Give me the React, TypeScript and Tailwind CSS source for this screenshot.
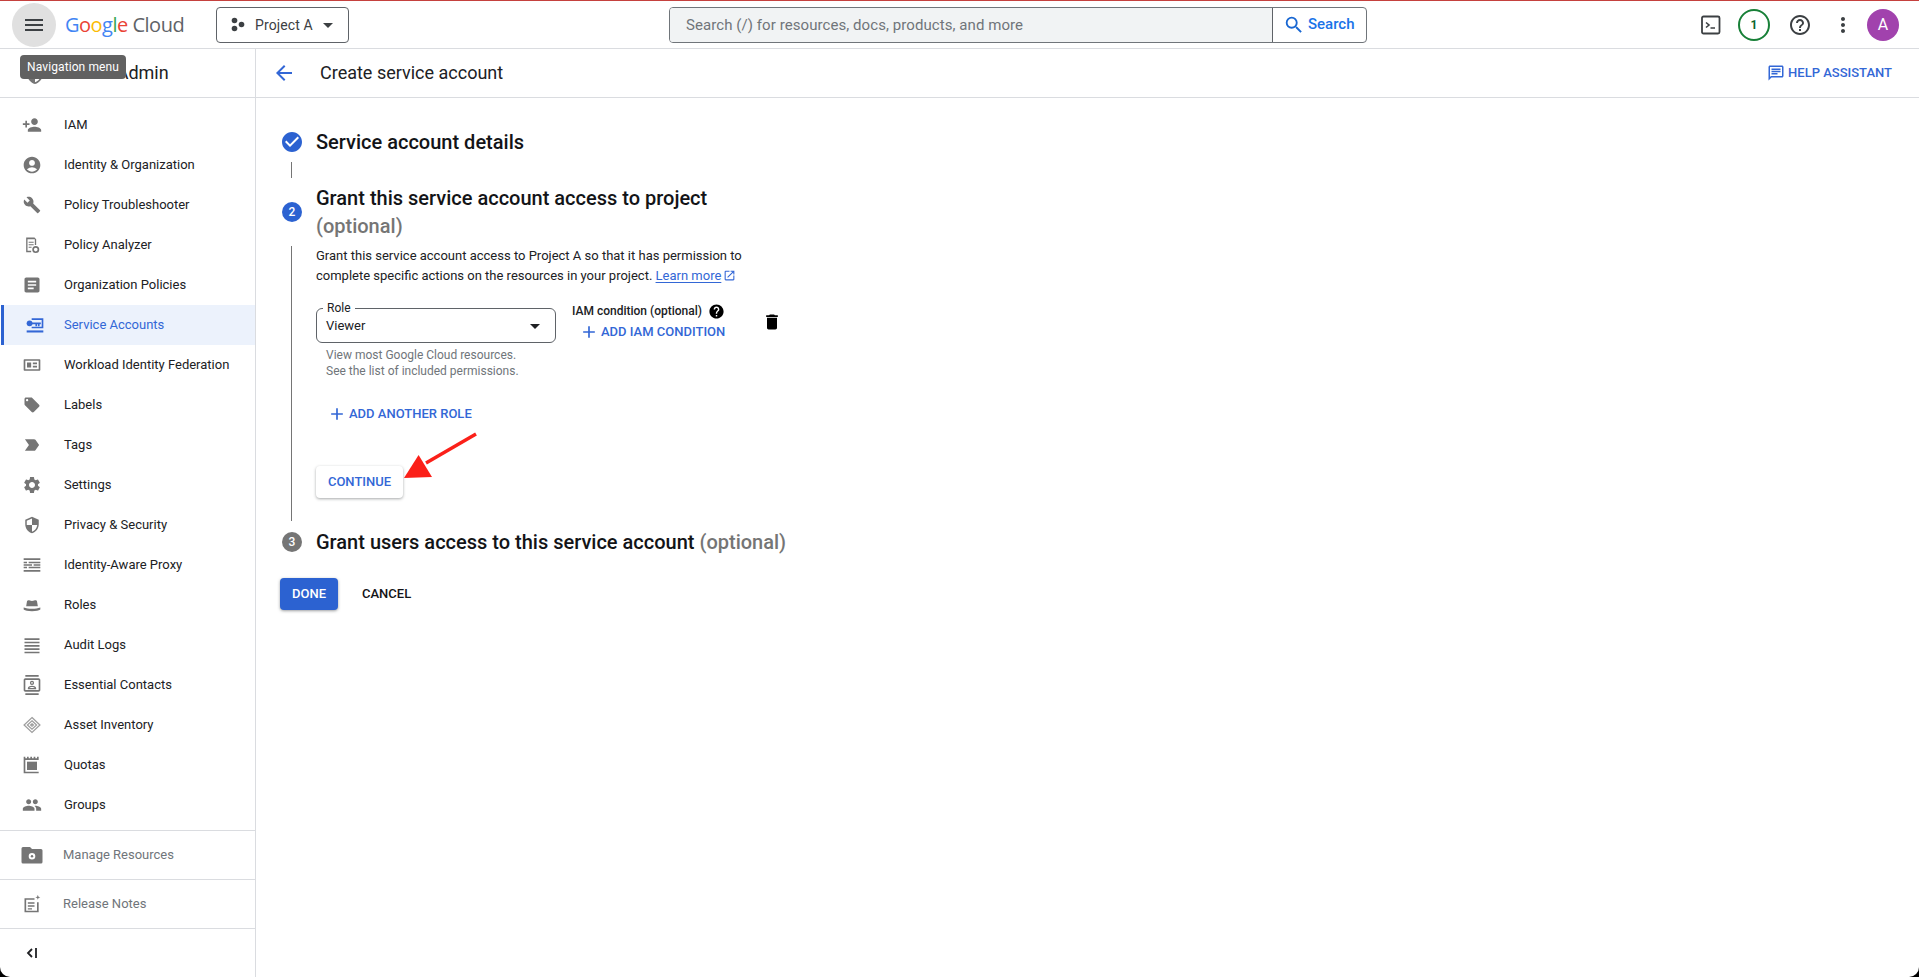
import { ReactNode } from "react";
import {
  MdAccountCircle, MdAdd, MdArrowBack, MdArrowDropDown, MdArticle, MdBuild, MdCheckCircle, MdDelete,
  MdHelp, MdHelpOutline, MdLabelImportant, MdLocalOffer, MdMenu, MdMoreVert, MdOpenInNew, MdOutlineChat,
  MdOutlineContacts, MdPeople, MdPersonAdd, MdSearch, MdSecurity, MdSettings,
} from "react-icons/md";

const G = "#757575";

function Svg({ children }: { children: ReactNode }) {
  return <svg width="20" height="20" viewBox="0 0 24 24" fill={G}>{children}</svg>;
}

const AnalyzerIcon = () => (
  <Svg>
    <path d="M5 3h10l2 2v7h-1.600V5H6.600v14H11v1.600H5z" />
    <path d="M8 8h6v1.300H8zM8 11h6v1.300H8zM8 14h3.500v1.300H8z" />
    <circle cx="16.500" cy="17.500" r="3.200" fill="none" stroke={G} strokeWidth="2" />
  </Svg>
);
const ServiceAccountIcon = () => (
  <svg width="20" height="20" viewBox="0 0 24 24" fill="#3367d6">
    <path d="M2 18.500h20V21H2z" />
    <path d="M8 4v2h12v8H8v2h14V4z" />
    <circle cx="5.500" cy="10" r="3.500" />
    <path d="M8 9h11v2.200h-1.500v2.300h-2v-2.300h-1v2.300h-2v-2.300H8z" />
  </svg>
);
const WorkloadIcon = () => (
  <Svg>
    <path fillRule="evenodd" d="M3 5h18a1 1 0 0 1 1 1v12a1 1 0 0 1-1 1H3a1 1 0 0 1-1-1V6a1 1 0 0 1 1-1zm1 2v10h16V7z" />
    <path d="M6 9h5v6H6zM13 9h5v2h-5zM13 13h5v2h-5z" />
  </Svg>
);
const ProxyIcon = () => (
  <Svg>
    <path d="M2 4h20v2H2zM2 18h20v2H2zM2 8h4v2H2zM8 8h14v2H8zM2 14h4v2H2zM8 14h14v2H8zM2 11h10v2H2zM14 11h8v2h-8z" />
  </Svg>
);
const RolesIcon = () => (
  <Svg>
    <path d="M6 7.500C6.500 6 8 6 9.500 6.700c1.500.6 3.500.6 5 0C16 6 17.500 6 18 7.500l1 6H5z" />
    <path d="M2 15c3 1 6 1.500 10 1.500S19 16 22 15v2.500c-2 1.500-5 2-10 2s-8-.5-10-2z" />
  </Svg>
);
const AuditIcon = () => (
  <Svg>
    <path d="M3 4h18v2H3zM3 8h18v2H3zM3 12h18v2H3zM3 16h18v2H3zM3 20h18v2H3z" />
  </Svg>
);
const AssetIcon = () => (
  <Svg>
    <g fill="none" stroke="#9e9e9e" strokeWidth="1.500">
      <path d="M12 3l9.500 9-9.500 9-9.500-9z" />
      <path d="M12 7l5.500 5-5.500 5-5.500-5z" />
      <path d="M12 10.500l1.700 1.500-1.700 1.500-1.700-1.500z" />
    </g>
  </Svg>
);
const QuotasIcon = () => (
  <Svg>
    <path fillRule="evenodd" d="M2 2h2v2h2V2h2v2h2V2h2v2h2V2h2v2h2V2h2v20H2zm2 4v14h16V6z" />
    <path d="M6 8h12v10H6z" />
  </Svg>
);
const FolderGearIcon = () => (
  <svg width="24" height="24" viewBox="0 0 24 24" fill={G}>
    <path fillRule="evenodd" d="M3 4h7l2 2h9a1.500 1.500 0 0 1 1.500 1.500V19a1.500 1.500 0 0 1-1.500 1.500H3A1.500 1.500 0 0 1 1.500 19V5.500A1.500 1.500 0 0 1 3 4zm9 6a3.300 3.300 0 1 0 0 6.600 3.300 3.300 0 0 0 0-6.600z" />
    <circle cx="12" cy="13.300" r="1.200" />
  </svg>
);
const NotesIcon = () => (
  <Svg>
    <path d="M3 5h12v2H5v13h13V10h2v12H3z" />
    <path d="M7 10h8v1.700H7zM7 13.500h8v1.700H7zM7 17h5v1.700H7z" />
    <path d="M19 1l.8 2.200L22 4l-2.200.8L19 7l-.8-2.200L16 4l2.200-.8z" />
  </Svg>
);

const items: { label: string; icon: ReactNode; active?: boolean }[] = [
  { label: "IAM", icon: <MdPersonAdd size={20} color={G} /> },
  { label: "Identity & Organization", icon: <MdAccountCircle size={20} color={G} /> },
  { label: "Policy Troubleshooter", icon: <MdBuild size={18} color={G} /> },
  { label: "Policy Analyzer", icon: <AnalyzerIcon /> },
  { label: "Organization Policies", icon: <MdArticle size={20} color={G} /> },
  { label: "Service Accounts", icon: <ServiceAccountIcon />, active: true },
  { label: "Workload Identity Federation", icon: <WorkloadIcon /> },
  { label: "Labels", icon: <MdLocalOffer size={18} color={G} /> },
  { label: "Tags", icon: <MdLabelImportant size={20} color={G} /> },
  { label: "Settings", icon: <MdSettings size={20} color={G} /> },
  { label: "Privacy & Security", icon: <MdSecurity size={18} color={G} /> },
  { label: "Identity-Aware Proxy", icon: <ProxyIcon /> },
  { label: "Roles", icon: <RolesIcon /> },
  { label: "Audit Logs", icon: <AuditIcon /> },
  { label: "Essential Contacts", icon: <MdOutlineContacts size={20} color={G} /> },
  { label: "Asset Inventory", icon: <AssetIcon /> },
  { label: "Quotas", icon: <QuotasIcon /> },
  { label: "Groups", icon: <MdPeople size={20} color={G} /> },
];

function TopBar() {
  return (
    <header className="relative h-[49px] shrink-0 flex items-center border-t border-t-[#c5413e] border-b border-b-[#dadce0] bg-white">
      <div className="ml-3 w-11 h-11 rounded-full bg-[#e0e0e0] flex items-center justify-center">
        <MdMenu size={24} color="#3c4043" />
      </div>
      <div className="ml-[9px] w-[151px] text-[20px] tracking-[-0.5px] leading-none font-['Open_Sans',sans-serif]">
        <span className="text-[#4285f4]">G</span>
        <span className="text-[#ea4335]">o</span>
        <span className="text-[#fbbc04]">o</span>
        <span className="text-[#4285f4]">g</span>
        <span className="text-[#34a853]">l</span>
        <span className="text-[#ea4335]">e</span>
        <span className="text-[#5f6368]"> Cloud</span>
      </div>
      <div className="w-[133px] h-9 border border-[#5f6368] rounded flex items-center pl-[13px] text-sm text-[#3c4043]">
        <svg width="16" height="16" viewBox="0 0 16 16" fill="#3c4043">
          <circle cx="4.500" cy="3.500" r="2.800" />
          <circle cx="11.500" cy="7.500" r="2.800" />
          <circle cx="4.500" cy="11.500" r="2.800" />
        </svg>
        <span className="ml-[9px] tracking-[0.1px]">Project A</span>
        <MdArrowDropDown size={24} className="ml-[3px]" color="#3c4043" />
      </div>
      <div className="ml-[320px] w-[698px] h-9 border border-[#70757a] rounded flex overflow-hidden">
        <div className="flex-1 bg-[#f1f3f4] border-r border-[#5f6368] flex items-center pl-4 pt-px text-[15px] tracking-[0.07px] text-[#70757a]">
          Search (/) for resources, docs, products, and more
        </div>
        <div className="w-[93px] flex items-center pl-[10px] text-[15px] font-medium text-[#1a73e8]">
          <MdSearch size={22} color="#1967d2" />
          <span className="ml-[3px]">Search</span>
        </div>
      </div>
      <div className="ml-auto flex items-center">
        <svg width="20" height="20" viewBox="0 0 20 20" className="mr-[17px]">
          <rect x="1" y="1.500" width="17.500" height="17" rx="1.500" fill="none" stroke="#3c4043" strokeWidth="1.800" />
          <path d="M5 7.500l3 2.500-3 2.500M9.500 13h4.500" fill="none" stroke="#3c4043" strokeWidth="1.600" />
        </svg>
        <div className="w-8 h-8 rounded-full border-2 border-[#188038] flex items-center justify-center text-xs font-bold text-[#0d652d]">1</div>
        <MdHelpOutline size={24} color="#3c4043" className="ml-[18px]" />
        <MdMoreVert size={24} color="#3c4043" className="ml-[19px]" />
        <div className="ml-3 mr-5 w-8 h-8 rounded-full bg-[#a142ad] flex items-center justify-center text-white text-base">A</div>
      </div>
    </header>
  );
}

function Sidebar() {
  return (
    <aside className="relative w-[256px] shrink-0 border-r border-[#dadce0] flex flex-col">
      <div className="h-[49px] shrink-0 border-b border-[#dadce0] flex items-center pl-[64px] text-lg text-[#202124]">IAM &amp; Admin</div>
      <div className="absolute left-[24px] top-[14px]">
        <MdSecurity size={22} color={G} />
      </div>
      <nav className="pt-[7px]">
        {items.map((it) => (
          <div
            key={it.label}
            className={
              it.active
                ? "h-10 flex items-center bg-[#ecf2fc] border-l-[3px] border-[#2c62d1] ml-px text-[#3367d6]"
                : "h-10 flex items-center text-[#202124]"
            }
          >
            <span className={it.active ? "w-[20px] ml-[21px] flex justify-center" : "w-[20px] ml-[22px] flex justify-center"}>{it.icon}</span>
            <span className={it.active ? "ml-[19px] text-[13px]" : "ml-[22px] text-[13px]"}>{it.label}</span>
          </div>
        ))}
      </nav>
      <div className="mt-[5px] h-[49px] border-t border-[#dadce0] flex items-center text-[13px] text-[#70757a]">
        <span className="w-6 ml-5 flex justify-center"><FolderGearIcon /></span>
        <span className="ml-[19px]">Manage Resources</span>
      </div>
      <div className="h-[49px] border-t border-[#dadce0] flex items-center text-[13px] text-[#70757a]">
        <span className="w-6 ml-5 flex justify-center"><NotesIcon /></span>
        <span className="ml-[19px]">Release Notes</span>
      </div>
      <div className="h-[49px] border-t border-[#dadce0] flex items-center pl-[26px]">
        <svg width="12" height="12" viewBox="0 0 12 12" fill="none" stroke="#202124" strokeWidth="1.800">
          <path d="M6 2L2 6l4 4" />
          <path d="M10 1v10" />
        </svg>
      </div>
    </aside>
  );
}

function StepCircle({ n, gray }: { n: number; gray?: boolean }) {
  return (
    <div className={gray ? "w-5 h-5 rounded-full bg-[#757575] text-white text-xs font-medium flex items-center justify-center" : "w-5 h-5 rounded-full bg-[#2c62d1] text-white text-xs font-medium flex items-center justify-center"}>
      {n}
    </div>
  );
}

function Main() {
  return (
    <main className="flex-1 flex flex-col">
      <div className="h-[49px] shrink-0 border-b border-[#dadce0] flex items-center pl-4 pr-[27px]">
        <MdArrowBack size={24} color="#3367d6" className="mr-[24px] ml-0" />
        <span className="ml-0 text-lg text-[#202124]">Create service account</span>
        <div className="ml-auto flex items-center text-[13px] font-medium text-[#3367d6]">
          <MdOutlineChat size={18} color="#3367d6" />
          <span className="ml-[3px]">HELP ASSISTANT</span>
        </div>
      </div>

      <div className="pl-6 pt-[33px] relative flex-1">
        {/* step 1 */}
        <div className="flex items-center h-[22px]">
          <MdCheckCircle size={24} color="#2c62d1" className="mr-3" />
          <h2 className="text-xl font-medium text-[#131417]">Service account details</h2>
        </div>
        <div className="ml-[11px] mt-[9px] h-4 w-px bg-[#757575]" />

        {/* step 2 */}
        <div className="flex items-center mt-[6px]">
          <div className="ml-0.5 mr-[14px]"><StepCircle n={2} /></div>
          <h2 className="w-[420px] text-xl leading-7 font-medium text-[#131417]">
            Grant this service account access to project <span className="text-[#757575]">(optional)</span>
          </h2>
        </div>
        <div className="ml-[11px] mt-[6px] pl-[24px] border-l border-[#757575] h-[275px]">
          <p className="w-[440px] text-[13px] leading-5 text-[#202124]">
            Grant this service account access to Project A so that it has permission to complete specific actions on the resources in your project.{" "}
            <span className="text-[#3367d6] underline underline-offset-2">Learn more</span>
            <MdOpenInNew size={13} color="#3367d6" className="inline ml-0.5 -mt-0.5" />
          </p>
          <div className="flex mt-[22px]">
            <div className="w-[240px]">
              <div className="relative h-[35px] border border-[#5f6368] rounded-md flex items-center pl-[9px] text-[13px] text-[#202124]">
                <span className="absolute -top-[8px] left-[6px] bg-white px-[4px] text-xs leading-[14px]">Role</span>
                <span>Viewer</span>
                <MdArrowDropDown size={24} color="#202124" className="ml-auto mr-2" />
              </div>
              <p className="pl-[10px] mt-[4px] text-xs leading-4 text-[#70757a]">View most Google Cloud resources.</p>
              <p className="pl-[10px] text-xs leading-4 text-[#70757a]">See the list of included permissions.</p>
            </div>
            <div className="ml-4 -mt-[5px]">
              <div className="flex items-center text-xs font-medium text-[#202124] h-[16px]">
                IAM condition (optional)
                <MdHelp size={17} color="#000" className="ml-1.5" />
              </div>
              <div className="flex items-center ml-[7px] mt-[3px] text-[13px] font-medium text-[#3367d6] h-[20px]">
                <MdAdd size={20} color="#3367d6" />
                <span className="ml-[2px]">ADD IAM CONDITION</span>
              </div>
            </div>
            <MdDelete size={20} color="#000" className="ml-[37px] mt-1" />
          </div>
          <div className="flex items-center mt-[25px] ml-[11px] text-[13px] font-medium text-[#3367d6] h-5">
            <MdAdd size={20} color="#3367d6" />
            <span className="ml-[2px]">ADD ANOTHER ROLE</span>
          </div>
          <div className="mt-[42px] w-[87px] h-8 rounded bg-white shadow-[0_1px_3px_rgba(60,64,67,0.45)] flex items-center justify-center text-[13px] font-medium text-[#3367d6]">CONTINUE</div>
        </div>

        {/* step 3 */}
        <div className="flex items-center mt-[7px] h-7">
          <div className="ml-0.5 mr-[14px]"><StepCircle n={3} gray /></div>
          <h2 className="text-xl font-medium text-[#131417]">
            Grant users access to this service account <span className="text-[#757575]">(optional)</span>
          </h2>
        </div>
        <div className="flex items-center mt-[22px]">
          <div className="w-[58px] h-8 rounded bg-[#2c62d1] shadow-[0_1px_3px_rgba(60,64,67,0.5)] flex items-center justify-center text-[13px] font-medium text-white">DONE</div>
          <span className="ml-6 text-[13px] font-medium text-[#131417]">CANCEL</span>
        </div>

        {/* red annotation arrow */}
        <svg className="absolute left-[140px] top-[331px]" width="90" height="65" viewBox="0 0 90 65">
          <path d="M80 5L30 34" stroke="#fb2019" strokeWidth="3.500" />
          <path d="M8 49L22.600 26 36 48z" fill="#fb2019" />
        </svg>
      </div>
    </main>
  );
}

export default function App() {
  return (
    <div className="bg-black h-[977px] w-full">
      <div className="relative h-full bg-white rounded-b-[10px] overflow-hidden flex flex-col font-['Roboto',sans-serif]">
        <TopBar />
        <div className="flex flex-1 min-h-0">
          <Sidebar />
          <Main />
        </div>
        <div className="absolute left-5 top-[55px] w-[106px] h-6 rounded bg-[#616161] flex items-center justify-center text-xs tracking-[0.1px] text-white">Navigation menu</div>
      </div>
    </div>
  );
}
